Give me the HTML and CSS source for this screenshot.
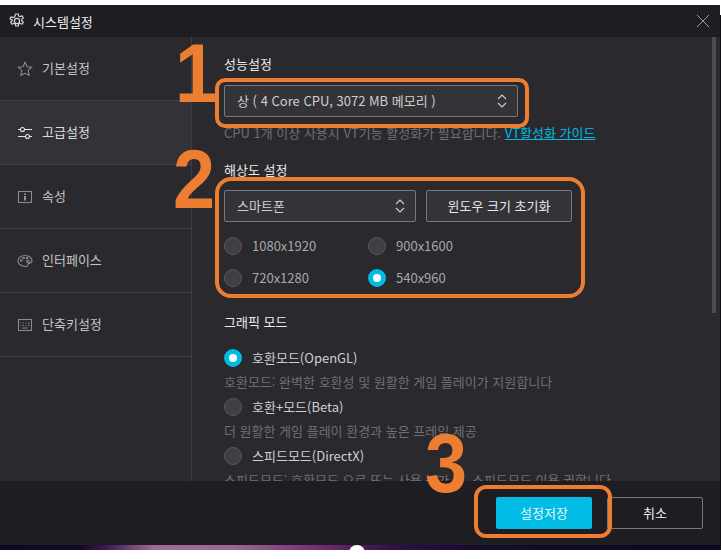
FILE: index.html
```html
<!DOCTYPE html>
<html lang="ko">
<head>
    <meta charset="UTF-8">
    <title>시스템설정</title>
    <link rel="stylesheet" href="styles.css">
</head>
<body>

<div class="window">
    <div class="titlebar">
        <svg class="gear" viewBox="0 0 16 16" width="16" height="16" fill="none" stroke="#d8d8d8" stroke-width="1.2">
            <path d="M6.7 1h2.6l.4 2 1.5.7 1.8-1 1.3 2.2-1.6 1.3v1.6l1.600 1.300-1.300 2.200-1.800-1-1.500.7-.4 2H6.700l-.4-2-1.500-.7-1.800 1-1.300-2.200 1.600-1.300V7.200L1 5.900l1.300-2.200 1.800 1 1.500-.7z"/>
            <circle cx="8" cy="8" r="2.6"/>
        </svg>
        <span class="title">시스템설정</span>
        <svg class="close" viewBox="0 0 12 12" width="12" height="12" stroke="#a0a0a0" stroke-width="1">
            <path d="M0 0L12 12M12 0L0 12"/>
        </svg>
    </div>

    <div class="body">
        <div class="sidebar">
            <div class="nav-item">
                <svg viewBox="0 0 16 16" width="16" height="16" fill="none" stroke="#8a8a8a" stroke-width="1.1"><path d="M8 1.200l2 4.500 4.800.5-3.600 3.200 1 4.800L8 12.300l-4.200 1.900 1-4.800L1.200 6.200l4.800-.5z"/></svg>
                <span>기본설정</span>
            </div>
            <div class="nav-item active">
                <svg viewBox="0 0 16 16" width="16" height="16" fill="none" stroke="#e4e4e4" stroke-width="1.1"><path d="M1 4.500h2.500M7.500 4.500H15M1 11.500h7.500M12.500 11.500H15"/><circle cx="5.500" cy="4.500" r="2"/><circle cx="10.500" cy="11.500" r="2"/></svg>
                <span>고급설정</span>
            </div>
            <div class="nav-item">
                <svg viewBox="0 0 16 16" width="16" height="16" fill="none" stroke="#8a8a8a" stroke-width="1.1"><rect x="1.500" y="2.500" width="13" height="11"/><path d="M8 4.500v1.500M8 7v4.500" stroke="#c0c0c0" stroke-width="1.400"/></svg>
                <span>속성</span>
            </div>
            <div class="nav-item">
                <svg viewBox="0 0 16 16" width="16" height="16" fill="none" stroke="#8a8a8a" stroke-width="1.1"><path d="M8 2.500c4 0 7 2.300 7 5.300 0 2.600-2.500 2.400-3.500 2.700-1.200.4-.6 1.500-.9 2.300-.3.700-1.200.9-2.400.7C4 13 1 11 1 7.800 1 4.800 4 2.500 8 2.500z"/><circle cx="4.300" cy="7.500" r=".8"/><circle cx="6.500" cy="5" r=".8"/><circle cx="10" cy="5" r=".8"/><circle cx="11" cy="8.300" r="1.300"/></svg>
                <span>인터페이스</span>
            </div>
            <div class="nav-item">
                <svg viewBox="0 0 16 16" width="16" height="16" fill="none" stroke="#8a8a8a" stroke-width="1.1"><rect x="1.500" y="2.500" width="13" height="11"/><path d="M3.500 6h1M6 6h1M8.500 6h1M11 6h1.500M3.500 8.500h1M6 8.500h1M8.500 8.500h1M11 8.500h1.500M5 11h6"/></svg>
                <span>단축키설정</span>
            </div>
        </div>

        <div class="content">
            <div class="label top-label">성능설정</div>
            <div class="select wide">
                <span>상 ( 4 Core CPU, 3072 MB 메모리 )</span>
                <svg class="updown" viewBox="0 0 10 16" width="10" height="16" fill="none" stroke="#d0d0d0" stroke-width="1.100"><path d="M1 6l4-4 4 4M1 10l4 4 4-4"/></svg>
            </div>
            <div class="hint first">CPU 1개 이상 사용시 VT기능 활성화가 필요합니다. <a href="#">VT활성화 가이드</a></div>

            <div class="label res-label">해상도 설정</div>
            <div class="res-top">
                <div class="select narrow">
                    <span>스마트폰</span>
                    <svg class="updown" viewBox="0 0 10 16" width="10" height="16" fill="none" stroke="#d0d0d0" stroke-width="1.100"><path d="M1 6l4-4 4 4M1 10l4 4 4-4"/></svg>
                </div>
                <div class="btn reset">윈도우 크기 초기화</div>
            </div>
            <div class="res-grid">
                <div class="radio-row"><i class="radio"></i>1080x1920</div>
                <div class="radio-row"><i class="radio"></i>900x1600</div>
                <div class="radio-row"><i class="radio"></i>720x1280</div>
                <div class="radio-row"><i class="radio on"></i>540x960</div>
            </div>

            <div class="label mode-label">그래픽 모드</div>
            <div class="radio-row mode"><i class="radio on"></i>호환모드(OpenGL)</div>
            <div class="hint">호환모드: 완벽한 호환성 및 원활한 게임 플레이가 지원합니다</div>
            <div class="radio-row mode"><i class="radio"></i>호환+모드(Beta)</div>
            <div class="hint">더 원활한 게임 플레이 환경과 높은 프레임 제공</div>
            <div class="radio-row mode"><i class="radio"></i>스피드모드(DirectX)</div>
            <div class="hint">스피드모드: 호환모드 으로 또는 사용 불가 시, 스피드모드 이용 권합니다</div>

            <div class="scrollbar"></div>
        </div>
    </div>

    <div class="footer">
        <div class="btn save">설정저장</div>
        <div class="btn cancel">취소</div>
    </div>
</div>
<div class="wallpaper"><i class="knob"></i></div>
<div class="edge"></div>

<!-- orange marks drawn over the screenshot -->
<div class="mark box-1"></div>
<div class="mark box-2"></div>
<div class="mark box-3"></div>
<div class="num num-1">1</div>
<div class="num num-2">2</div>
<div class="num num-3">3</div>

</body>
</html>
```

FILE: styles.css
```css
* {
    box-sizing: border-box;
}

html, body {
    margin: 0;
    height: 100%;
}

body {
    position: relative;
    overflow: hidden;
    background-color: #ffffff;
    padding-top: 5px;
    font-family: "Noto Sans CJK KR", "Noto Sans", sans-serif;
    font-size: 13px;
    color: #d8d8d8;
}

.window {
    width: 720px;
    height: 540px;
    display: flex;
    flex-direction: column;
    background-color: #29292e;
}

.titlebar {
    height: 32px;
    flex: none;
    display: flex;
    align-items: center;
    padding: 0 11px 0 9px;
    background-color: #1d1d22;
}

.title {
    margin-left: 8px;
    color: #f0f0f0;
}

.close {
    margin-left: auto;
}

.body {
    flex: 1;
    min-height: 0;
    display: flex;
}

.sidebar {
    width: 192px;
    flex: none;
    border-right: 1px solid #3d3d42;
}

.nav-item {
    height: 64px;
    display: flex;
    align-items: center;
    gap: 9px;
    padding-left: 17px;
    border-bottom: 1px solid #3d3d42;
    color: #c4c4c4;
}

.nav-item span {
    margin-bottom: 2px;
}

.nav-item.active {
    background-color: #323238;
    color: #dcdcdc;
}

.content {
    position: relative;
    flex: 1;
    overflow: hidden;
    padding: 19px 0 0 32px;
}

.scrollbar {
    position: absolute;
    top: 0;
    right: 4px;
    width: 4px;
    height: 276px;
    background-color: #4b4b50;
}

.label {
    height: 18px;
    line-height: 16px;
    color: #ececec;
}

.select {
    height: 32px;
    display: flex;
    align-items: center;
    justify-content: space-between;
    padding: 0 10px 2px 12px;
    border: 1px solid #77777c;
    border-radius: 2px;
    background-color: #333338;
    color: #cfcfcf;
}

.select.wide {
    width: 294px;
    margin-top: 11px;
}

.select.narrow {
    width: 192px;
}

.updown {
    margin-top: 2px;
}

.hint {
    height: 18px;
    line-height: 18px;
    color: #6f6f74;
    white-space: nowrap;
}

.hint.first {
    margin-top: 7px;
}

.hint a {
    color: #00bce4;
}

.res-label {
    margin-top: 20px;
}

.res-top {
    display: flex;
    gap: 10px;
    margin-top: 10px;
}

.btn {
    display: flex;
    align-items: center;
    justify-content: center;
    height: 32px;
    padding-bottom: 2px;
    border-radius: 2px;
}

.reset {
    width: 146px;
    border: 1px solid #77777c;
    background-color: #333338;
    color: #e8e8e8;
}

.res-grid {
    display: grid;
    grid-template-columns: 144px 144px;
    row-gap: 14px;
    margin-top: 15px;
}

.radio-row {
    display: flex;
    align-items: flex-start;
    gap: 10px;
    height: 18px;
    line-height: 18px;
    color: #a8a8a8;
}

.radio {
    width: 18px;
    height: 18px;
    flex: none;
    border: 1px solid #57575c;
    border-radius: 50%;
    background-color: #3f3f44;
}

.radio.on {
    border: 5px solid #00bce4;
    background-color: #ffffff;
}

.mode-label {
    margin-top: 27px;
}

.mode {
    margin-top: 7px;
    color: #cfcfcf;
}

.mode-label + .mode {
    margin-top: 17px;
}

.mode + .hint {
    margin-top: 6px;
}

.footer {
    height: 64px;
    flex: none;
    display: flex;
    align-items: center;
    justify-content: flex-end;
    padding-right: 17px;
    background-color: #1d1d22;
}

.save {
    width: 96px;
    background-color: #00bce4;
    color: #e8f8fc;
    margin-right: 15px;
}

.cancel {
    width: 96px;
    border: 1px solid #77777c;
    color: #f0f0f0;
}

.wallpaper {
    position: relative;
    width: 720px;
    height: 5px;
    overflow: hidden;
    background: linear-gradient(90deg, #0e0628 0, #14082a 80px, #3a1a50 105px, #a06c94 155px, #9a6a94 230px, #7a3a78 300px, #5a1f5c 350px, #2a1040 400px, #160a30 480px, #0c0628 720px);
}

.knob {
    position: absolute;
    left: 349px;
    top: 0;
    width: 16px;
    height: 16px;
    border-radius: 50%;
    background-color: #ffffff;
}

.edge {
    position: absolute;
    right: 0;
    top: 15px;
    width: 1px;
    height: 535px;
    background-color: #101014;
}

.mark {
    position: absolute;
    border: 4px solid #ed7d31;
    pointer-events: none;
}

.box-1 {
    left: 215px;
    top: 78px;
    width: 314px;
    height: 50px;
    border-radius: 10px;
}

.box-2 {
    left: 215px;
    top: 177px;
    width: 370px;
    height: 121px;
    border-radius: 16px;
}

.box-3 {
    left: 474px;
    top: 485px;
    width: 138px;
    height: 53px;
    border-radius: 12px;
}

.num {
    position: absolute;
    font-family: "Liberation Sans", sans-serif;
    font-weight: 700;
    font-size: 84px;
    line-height: 84px;
    color: #ed7d31;
    transform: scaleX(0.9);
    transform-origin: left top;
}

.num-1 {
    left: 175px;
    top: 31px;
}

.num-2 {
    left: 173px;
    top: 137px;
}

.num-3 {
    left: 425px;
    top: 421px;
}
```
